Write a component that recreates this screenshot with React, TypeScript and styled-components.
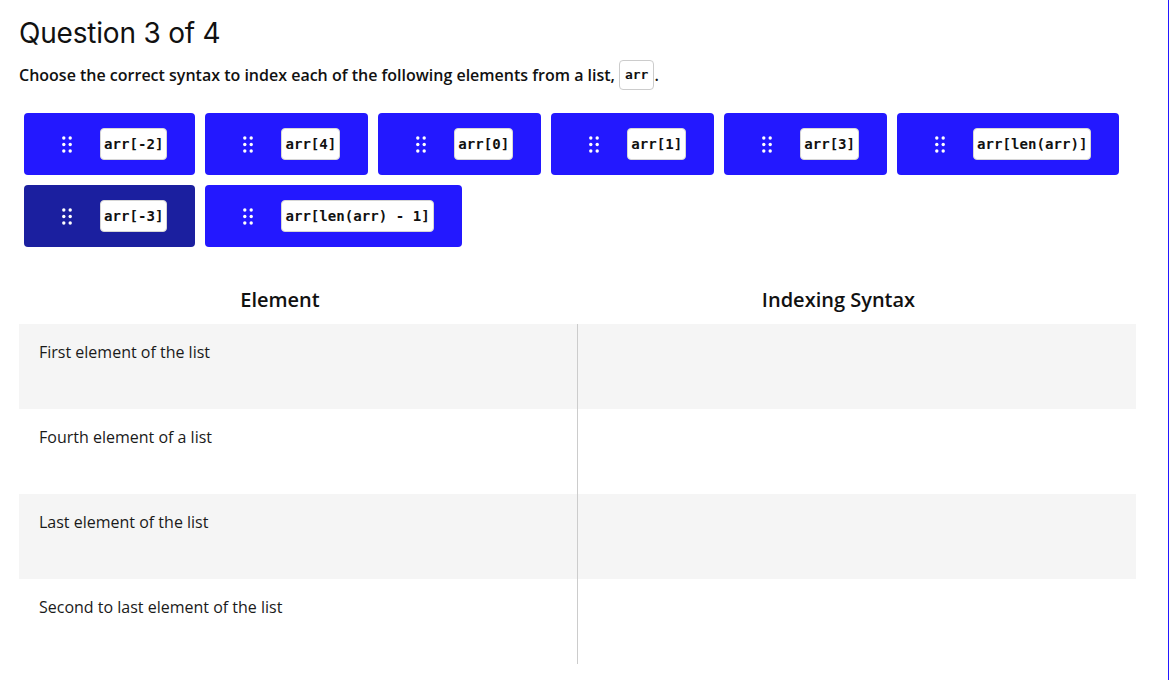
import React from "react";
import styled, { createGlobalStyle } from "styled-components";

const GlobalStyle = createGlobalStyle`
  html, body {
    margin: 0;
    padding: 0;
    background: #ffffff;
  }
  body {
    font-family: "Open Sans", "Noto Sans", sans-serif;
    color: #111111;
  }
`;

const Page = styled.div`
  width: 1169px;
  height: 680px;
  box-sizing: border-box;
  border-right: 1px solid #2318ff;
  padding: 0 19px;
  overflow: hidden;
`;

const Title = styled.h1`
  margin: 0;
  padding-top: 16px;
  font-family: Inter, "Liberation Sans", sans-serif;
  font-weight: 400;
  font-size: 28px;
  line-height: 34px;
  color: #111111;
  letter-spacing: -0.2px;
`;

const Prompt = styled.p`
  margin: 9px 0 0;
  font-size: 16px;
  font-weight: 600;
  line-height: 32px;
  color: #111111;
  display: flex;
  align-items: center;
`;

const InlineCode = styled.code`
  display: inline-flex;
  align-items: center;
  height: 30px;
  box-sizing: border-box;
  margin-left: 4px;
  padding: 0 5px;
  border: 1px solid #cccccc;
  border-radius: 4px;
  font-family: "DejaVu Sans Mono", "Liberation Mono", monospace;
  font-weight: 700;
  font-size: 13px;
  color: #111111;
`;

const Chips = styled.div`
  display: flex;
  flex-wrap: wrap;
  width: 1117px;
  margin-top: 22px;
`;

const Chip = styled.div<{ $dark?: boolean }>`
  display: flex;
  align-items: center;
  height: 62px;
  box-sizing: border-box;
  margin: 0 5px 10px;
  padding: 0 28px 0 38px;
  border-radius: 4px;
  background: ${(p) => (p.$dark ? "#1b1f9f" : "#2318ff")};
`;

const Grip = styled.svg`
  width: 10px;
  height: 17px;
  margin-right: 28px;
  flex-shrink: 0;
`;

const ChipCode = styled.code`
  display: flex;
  align-items: center;
  height: 32px;
  box-sizing: border-box;
  padding: 0 3px;
  background: #ffffff;
  border: 1px solid #d6d6d6;
  border-radius: 4px;
  font-family: "DejaVu Sans Mono", "Liberation Mono", monospace;
  font-weight: 700;
  font-size: 14.1px;
  color: #111111;
  white-space: pre;
`;

const Table = styled.div`
  width: 1117px;
  margin-top: 25px;
  display: grid;
  grid-template-columns: 558px 559px;
`;

const HeadCell = styled.div`
  height: 42px;
  box-sizing: border-box;
  padding: 0 36px 8px 0;
  display: flex;
  align-items: center;
  justify-content: center;
  font-size: 20px;
  font-weight: 600;
  color: #111111;
`;

const Cell = styled.div<{ $shade: boolean; $divider?: boolean }>`
  height: 85px;
  box-sizing: border-box;
  padding: 16px 20px;
  font-size: 16px;
  line-height: 24px;
  color: #1a1a1a;
  background: ${(p) => (p.$shade ? "#f5f5f5" : "#ffffff")};
  border-left: ${(p) => (p.$divider ? "1px solid #cccccc" : "none")};
`;

const chipsData = [
  { code: "arr[-2]" },
  { code: "arr[4]" },
  { code: "arr[0]" },
  { code: "arr[1]" },
  { code: "arr[3]" },
  { code: "arr[len(arr)]" },
  { code: "arr[-3]", dark: true },
  { code: "arr[len(arr) - 1]" },
];

const rows = [
  "First element of the list",
  "Fourth element of a list",
  "Last element of the list",
  "Second to last element of the list",
];

function GripIcon() {
  return (
    <Grip viewBox="0 0 10 17">
      {[2, 8.5, 15].map((cy) =>
        [1.8, 8.2].map((cx) => (
          <circle key={`${cx}-${cy}`} cx={cx} cy={cy} r={1.7} fill="#ffffff" />
        ))
      )}
    </Grip>
  );
}

export default function App() {
  return (
    <Page>
      <GlobalStyle />
      <Title>Question 3 of 4</Title>
      <Prompt>
        Choose the correct syntax to index each of the following elements from a list,
        <InlineCode>arr</InlineCode>.
      </Prompt>

      <Chips>
        {chipsData.map((c) => (
          <Chip key={c.code} $dark={c.dark}>
            <GripIcon />
            <ChipCode>{c.code}</ChipCode>
          </Chip>
        ))}
      </Chips>

      <Table>
        <HeadCell>Element</HeadCell>
        <HeadCell>Indexing Syntax</HeadCell>
        {rows.map((r, i) => (
          <React.Fragment key={r}>
            <Cell $shade={i % 2 === 0}>{r}</Cell>
            <Cell $shade={i % 2 === 0} $divider />
          </React.Fragment>
        ))}
      </Table>
    </Page>
  );
}
